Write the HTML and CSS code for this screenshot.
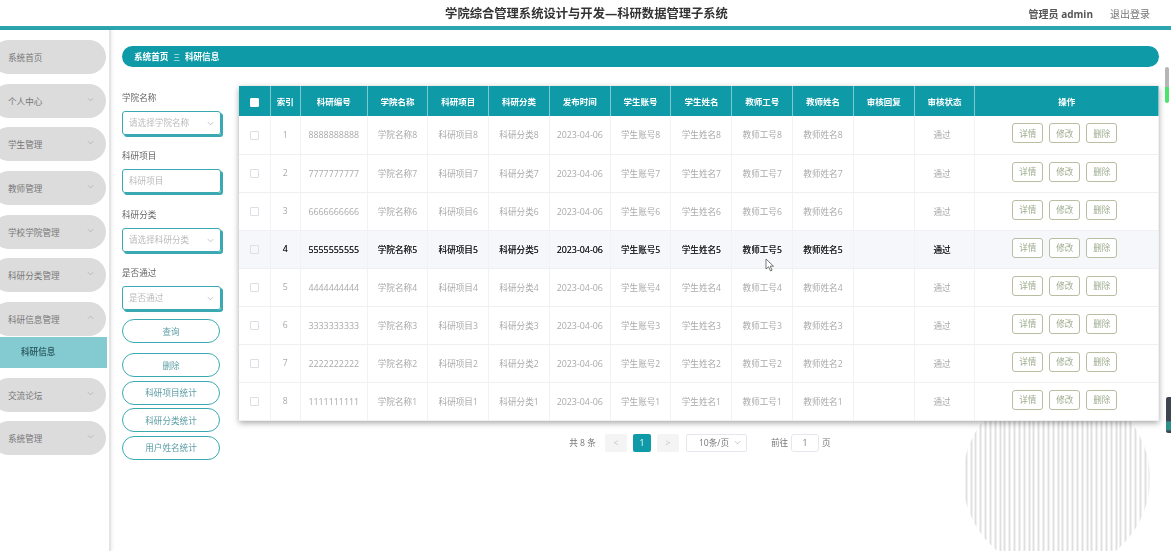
FILE: index.html
```html
<!DOCTYPE html>
<html lang="zh-CN">
<head>
    <meta charset="UTF-8">
    <meta name="viewport" content="width=device-width, initial-scale=1.0">
    <title>科研信息</title>
    <link rel="stylesheet" href="styles.css">
</head>
<body>
    <div class="topbar">
        <div></div>
        <div class="site-title">学院综合管理系统设计与开发—科研数据管理子系统</div>
        <div class="user-info">
            <span class="user-name">管理员 admin</span>
            <a class="logout">退出登录</a>
        </div>
    </div>

    <div class="page">
        <div class="sidebar">
            <div class="menu-item">系统首页</div>
            <div class="menu-item">个人中心<svg class="chev" viewBox="0 0 8 5"><path d="M1 1l3 3 3-3"/></svg></div>
            <div class="menu-item">学生管理<svg class="chev" viewBox="0 0 8 5"><path d="M1 1l3 3 3-3"/></svg></div>
            <div class="menu-item">教师管理<svg class="chev" viewBox="0 0 8 5"><path d="M1 1l3 3 3-3"/></svg></div>
            <div class="menu-item">学校学院管理<svg class="chev" viewBox="0 0 8 5"><path d="M1 1l3 3 3-3"/></svg></div>
            <div class="menu-item">科研分类管理<svg class="chev" viewBox="0 0 8 5"><path d="M1 1l3 3 3-3"/></svg></div>
            <div class="menu-item open">科研信息管理<svg class="chev" viewBox="0 0 8 5"><path d="M1 4l3-3 3 3"/></svg></div>
            <div class="submenu-item">科研信息</div>
            <div class="menu-item">交流论坛<svg class="chev" viewBox="0 0 8 5"><path d="M1 1l3 3 3-3"/></svg></div>
            <div class="menu-item">系统管理<svg class="chev" viewBox="0 0 8 5"><path d="M1 1l3 3 3-3"/></svg></div>
        </div>

        <div class="main">
            <div class="breadcrumb">
                <span>系统首页</span>
                <span class="sep">三</span>
                <span>科研信息</span>
            </div>

            <div class="content">
                <div class="filters">
                    <div class="form-group">
                        <label>学院名称</label>
                        <div class="field">请选择学院名称<svg class="chev" viewBox="0 0 8 5"><path d="M1 1l3 3 3-3"/></svg></div>
                    </div>
                    <div class="form-group">
                        <label>科研项目</label>
                        <div class="field">科研项目</div>
                    </div>
                    <div class="form-group">
                        <label>科研分类</label>
                        <div class="field">请选择科研分类<svg class="chev" viewBox="0 0 8 5"><path d="M1 1l3 3 3-3"/></svg></div>
                    </div>
                    <div class="form-group last">
                        <label>是否通过</label>
                        <div class="field">是否通过<svg class="chev" viewBox="0 0 8 5"><path d="M1 1l3 3 3-3"/></svg></div>
                    </div>
                    <button class="pill-btn btn-search">查询</button>
                    <button class="pill-btn">删除</button>
                    <button class="pill-btn">科研项目统计</button>
                    <button class="pill-btn">科研分类统计</button>
                    <button class="pill-btn">用户姓名统计</button>
                </div>

                <div class="table-area">
                    <table class="data-table">
                        <colgroup>
                            <col class="c-check"><col class="c-index"><col class="c-no">
                            <col class="c-std"><col class="c-std"><col class="c-std"><col class="c-std">
                            <col class="c-std"><col class="c-std"><col class="c-std"><col class="c-std">
                            <col class="c-std"><col class="c-std">
                            <col>
                        </colgroup>
                        <thead>
                            <tr>
                                <th><span class="check on"></span></th>
                                <th>索引</th><th>科研编号</th><th>学院名称</th><th>科研项目</th><th>科研分类</th>
                                <th>发布时间</th><th>学生账号</th><th>学生姓名</th><th>教师工号</th><th>教师姓名</th>
                                <th>审核回复</th><th>审核状态</th><th>操作</th>
                            </tr>
                        </thead>
                        <tbody>
                            <tr>
                                <td><span class="check"></span></td><td>1</td><td class="num">8888888888</td><td>学院名称8</td><td>科研项目8</td><td>科研分类8</td>
                                <td class="num">2023-04-06</td><td>学生账号8</td><td>学生姓名8</td><td>教师工号8</td><td>教师姓名8</td><td></td><td class="status">通过</td>
                                <td class="actions"><button>详情</button><button>修改</button><button>删除</button></td>
                            </tr>
                            <tr>
                                <td><span class="check"></span></td><td>2</td><td class="num">7777777777</td><td>学院名称7</td><td>科研项目7</td><td>科研分类7</td>
                                <td class="num">2023-04-06</td><td>学生账号7</td><td>学生姓名7</td><td>教师工号7</td><td>教师姓名7</td><td></td><td class="status">通过</td>
                                <td class="actions"><button>详情</button><button>修改</button><button>删除</button></td>
                            </tr>
                            <tr>
                                <td><span class="check"></span></td><td>3</td><td class="num">6666666666</td><td>学院名称6</td><td>科研项目6</td><td>科研分类6</td>
                                <td class="num">2023-04-06</td><td>学生账号6</td><td>学生姓名6</td><td>教师工号6</td><td>教师姓名6</td><td></td><td class="status">通过</td>
                                <td class="actions"><button>详情</button><button>修改</button><button>删除</button></td>
                            </tr>
                            <tr class="hover">
                                <td><span class="check"></span></td><td>4</td><td class="num">5555555555</td><td>学院名称5</td><td>科研项目5</td><td>科研分类5</td>
                                <td class="num">2023-04-06</td><td>学生账号5</td><td>学生姓名5</td><td>教师工号5</td><td>教师姓名5</td><td></td><td class="status">通过</td>
                                <td class="actions"><button>详情</button><button>修改</button><button>删除</button></td>
                            </tr>
                            <tr>
                                <td><span class="check"></span></td><td>5</td><td class="num">4444444444</td><td>学院名称4</td><td>科研项目4</td><td>科研分类4</td>
                                <td class="num">2023-04-06</td><td>学生账号4</td><td>学生姓名4</td><td>教师工号4</td><td>教师姓名4</td><td></td><td class="status">通过</td>
                                <td class="actions"><button>详情</button><button>修改</button><button>删除</button></td>
                            </tr>
                            <tr>
                                <td><span class="check"></span></td><td>6</td><td class="num">3333333333</td><td>学院名称3</td><td>科研项目3</td><td>科研分类3</td>
                                <td class="num">2023-04-06</td><td>学生账号3</td><td>学生姓名3</td><td>教师工号3</td><td>教师姓名3</td><td></td><td class="status">通过</td>
                                <td class="actions"><button>详情</button><button>修改</button><button>删除</button></td>
                            </tr>
                            <tr>
                                <td><span class="check"></span></td><td>7</td><td class="num">2222222222</td><td>学院名称2</td><td>科研项目2</td><td>科研分类2</td>
                                <td class="num">2023-04-06</td><td>学生账号2</td><td>学生姓名2</td><td>教师工号2</td><td>教师姓名2</td><td></td><td class="status">通过</td>
                                <td class="actions"><button>详情</button><button>修改</button><button>删除</button></td>
                            </tr>
                            <tr>
                                <td><span class="check"></span></td><td>8</td><td class="num">1111111111</td><td>学院名称1</td><td>科研项目1</td><td>科研分类1</td>
                                <td class="num">2023-04-06</td><td>学生账号1</td><td>学生姓名1</td><td>教师工号1</td><td>教师姓名1</td><td></td><td class="status">通过</td>
                                <td class="actions"><button>详情</button><button>修改</button><button>删除</button></td>
                            </tr>
                        </tbody>
                    </table>

                    <div class="pagination">
                        <span class="total">共 8 条</span>
                        <span class="page-btn">&lt;</span>
                        <span class="page-btn current">1</span>
                        <span class="page-btn">&gt;</span>
                        <span class="page-size">10条/页<svg class="chev" viewBox="0 0 8 5"><path d="M1 1l3 3 3-3"/></svg></span>
                        <span class="jump">前往</span>
                        <span class="jump-input">1</span>
                        <span>页</span>
                    </div>
                </div>
            </div>
        </div>
    </div>

    <div class="stripe-circle"></div>
    <div class="scroll-thumb"></div>
    <div class="side-widget"></div>
    <svg class="cursor" viewBox="0 0 10 14"><path d="M1 1v10l2.6-2.2L5.5 13l1.6-.8-1.9-4H8.500z"/></svg>
</body>
</html>
```

FILE: styles.css
```css
* {
    margin: 0;
    padding: 0;
    box-sizing: border-box;
    font-family: "Open Sans", "Noto Sans CJK SC", sans-serif;
}

html, body {
    height: 100%;
    overflow: hidden;
}

body {
    background-color: white;
    color: #666;
    font-size: 8.5px;
    filter: blur(0.4px);
}

.topbar {
    height: 30px;
    display: grid;
    grid-template-columns: 1fr auto 1fr;
    align-items: center;
    border-bottom: 4px solid #2ba5ae;
}

.site-title {
    font-size: 12.3px;
    font-weight: 700;
    color: #333;
    padding-left: 2px;
}

.user-info {
    display: flex;
    justify-content: flex-end;
    gap: 17px;
    padding-right: 21px;
    font-size: 10px;
}

.user-name {
    font-weight: 700;
    color: #555;
}

.logout {
    color: #777;
}

.page {
    display: flex;
    height: 521px;
}

.sidebar {
    width: 111px;
    flex-shrink: 0;
    padding-top: 10px;
    border-right: 2px solid #e4e4e4;
    box-shadow: 1px 0 3px rgba(0,0,0,0.08);
}

.menu-item {
    position: relative;
    width: 114px;
    height: 34px;
    margin-left: -8px;
    margin-bottom: 9.65px;
    padding-left: 16px;
    background-color: #dcdcdc;
    border-radius: 17px;
    line-height: 36px;
    font-size: 8.6px;
    color: #777;
}

.menu-item.open {
    margin-bottom: 1px;
}

.menu-item .chev {
    position: absolute;
    right: 12px;
    top: 13px;
}

.chev {
    width: 7px;
    height: 5px;
    fill: none;
    stroke: #aaa;
    stroke-width: 0.8;
}

.submenu-item {
    width: 107px;
    height: 31px;
    margin-bottom: 10px;
    padding-left: 21px;
    background-color: #84cbd1;
    line-height: 31px;
    font-size: 8.6px;
    font-weight: 700;
    color: #33626a;
}

.main {
    flex: 1;
    min-width: 0;
    padding: 16px 12px 0 11px;
}

.breadcrumb {
    height: 21px;
    display: flex;
    align-items: center;
    gap: 5px;
    padding-left: 12px;
    background-color: #0f9aa8;
    border-radius: 11px;
    color: white;
    font-size: 8.6px;
    font-weight: 700;
}

.breadcrumb .sep {
    font-size: 6.5px;
    font-weight: 400;
}

.content {
    display: flex;
    margin-top: 19px;
}

.filters {
    width: 100px;
    flex-shrink: 0;
    padding-top: 5px;
}

.form-group {
    margin-bottom: 14.4px;
}

.form-group.last {
    margin-bottom: 9px;
}

.form-group label {
    display: block;
    height: 14px;
    margin-bottom: 6px;
    line-height: 15px;
    font-size: 8.6px;
    color: #666;
}

.field {
    position: relative;
    width: 99px;
    height: 24px;
    padding-left: 6px;
    border: 1.5px solid #3aa9b1;
    border-radius: 3px;
    box-shadow: 2px 2px 0 #3aa9b1;
    line-height: 22px;
    font-size: 8.6px;
    color: #bbb;
}

.field .chev {
    position: absolute;
    right: 6px;
    top: 9px;
}

.pill-btn {
    display: block;
    width: 98px;
    height: 24px;
    margin-bottom: 3.5px;
    background-color: white;
    border: 1.5px solid #3aa9b1;
    border-radius: 12px;
    font-size: 8.6px;
    color: #5b9ea5;
}

.btn-search {
    margin-bottom: 10px;
}

.table-area {
    width: 920px;
    margin-left: 17px;
}

.data-table {
    width: 920px;
    table-layout: fixed;
    border-collapse: collapse;
    background-color: white;
    box-shadow: 0 2px 6px rgba(0,0,0,0.35);
}

.c-check { width: 31px; }
.c-index { width: 30.500px; }
.c-no { width: 66.500px; }
.c-std { width: 60.800px; }

.data-table th {
    height: 30px;
    background-color: #0f9aa8;
    border-right: 1px solid #7cc9d0;
    color: white;
    font-weight: 700;
    text-align: center;
}

.data-table td {
    height: 38px;
    border-right: 1px solid #f0f2f4;
    border-bottom: 1px solid #eef0f3;
    color: #aaa;
    text-align: center;
    font-size: 8.6px;
}

.data-table td.num {
    font-size: 8.9px;
}

.data-table td.status {
    padding-right: 5px;
}

.data-table tr.hover td {
    background-color: #f5f7fa;
    color: #222;
    text-shadow: 0 0 0.4px #222;
}

.check {
    display: inline-block;
    width: 9px;
    height: 9px;
    border: 1px solid #dcdfe6;
    border-radius: 1px;
    vertical-align: middle;
}

.check.on {
    background-color: white;
    border-color: white;
}

.data-table td.actions {
    padding: 0 4px 3px 0;
}

.actions button {
    width: 31px;
    height: 20px;
    margin: 0 3px;
    background-color: white;
    border: 1px solid #b9bea3;
    border-radius: 3px;
    font-size: 8.6px;
    color: #9dab8e;
}

.pagination {
    display: flex;
    justify-content: center;
    align-items: center;
    height: 18px;
    margin-top: 13px;
    padding-left: 2px;
    color: #777;
    font-size: 8.6px;
}

.total {
    margin-right: 9px;
}

.page-btn {
    width: 22px;
    height: 18px;
    margin-right: 6px;
    background-color: #f4f4f5;
    border-radius: 2px;
    line-height: 18px;
    text-align: center;
    color: #c0c4cc;
}

.page-btn.current {
    width: 18px;
    background-color: #0f9aa8;
    color: white;
}

.page-size {
    display: flex;
    align-items: center;
    justify-content: space-between;
    width: 61px;
    height: 18px;
    margin-left: 1px;
    padding: 0 5px 0 12px;
    border: 1px solid #e4e7ed;
    border-radius: 2px;
}

.jump {
    margin-left: 24px;
    margin-right: 3px;
}

.jump-input {
    width: 28px;
    height: 18px;
    margin-right: 3px;
    border: 1px solid #e4e7ed;
    border-radius: 3px;
    line-height: 16px;
    text-align: center;
}

.stripe-circle {
    position: absolute;
    left: 963px;
    top: 385px;
    width: 187px;
    height: 187px;
    z-index: -1;
    border-radius: 50%;
    background: repeating-linear-gradient(90deg, white 0, white 2.830px, #e0e0e0 2.830px, #e0e0e0 4.830px);
    background-position: -0.500px 0;
}

.scroll-thumb {
    position: absolute;
    left: 1165px;
    top: 67px;
    width: 4px;
    height: 36px;
    border-radius: 2px;
    background: linear-gradient(#b5b5b5 0, #b5b5b5 55%, #4be36e 55%, #4be36e 100%);
}

.side-widget {
    position: absolute;
    left: 1166px;
    top: 397px;
    width: 5px;
    height: 36px;
    border-radius: 2px 0 0 2px;
    background: linear-gradient(#3d4650 0, #3d4650 65%, #2f8f8a 70%, #2f8f8a 90%, #3d4650 95%);
}

.cursor {
    position: absolute;
    left: 765px;
    top: 258px;
    width: 10px;
    height: 14px;
    fill: white;
    stroke: #555;
    stroke-width: 0.8;
}
```
